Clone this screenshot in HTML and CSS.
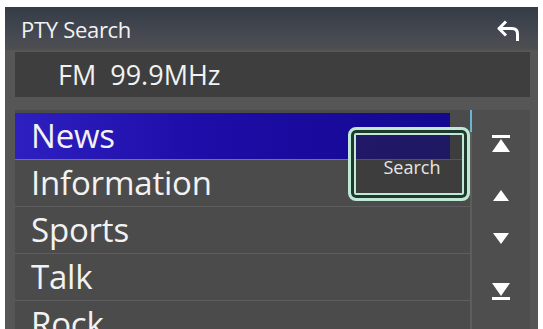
FILE: index.html
```html
<!DOCTYPE html>
<html lang="en">
<head>
    <meta charset="UTF-8">
    <meta name="viewport" content="width=device-width, initial-scale=1.0">
    <title>PTY Search</title>
    <link rel="stylesheet" href="styles.css">
</head>
<body>
    <div class="screen">
        <div class="header">
            <span class="title">PTY Search</span>
            <svg class="back" width="25" height="24" viewBox="0 0 25 24">
                <path d="M9 2.5 L2 9.5 L9 16.5 M2 9.5 H15 Q20.5 9.5 20.5 15 V22" fill="none" stroke="#fff" stroke-width="3" stroke-linejoin="round"/>
            </svg>
        </div>
        <div class="freq">FM&nbsp; 99.9MHz</div>
        <div class="content">
            <div class="list">
                <div class="row active">News</div>
                <div class="row">Information</div>
                <div class="row">Sports</div>
                <div class="row">Talk</div>
                <div class="row">Rock</div>
                <div class="thumb"></div>
                <button class="search-btn">Search</button>
            </div>
            <div class="scroller">
                <svg class="jump" width="20" height="18" viewBox="0 0 20 18">
                    <rect x="1" y="0" width="18" height="3" fill="#fff"/>
                    <polygon points="10,4 1,17 19,17" fill="#fff"/>
                </svg>
                <svg class="step" width="16" height="11" viewBox="0 0 16 11">
                    <polygon points="8,0 0,11 16,11" fill="#fff"/>
                </svg>
                <svg class="step" width="16" height="11" viewBox="0 0 16 11">
                    <polygon points="0,0 16,0 8,11" fill="#fff"/>
                </svg>
                <svg class="jump" width="20" height="18" viewBox="0 0 20 18">
                    <polygon points="1,1 19,1 10,14" fill="#fff"/>
                    <rect x="1" y="15" width="18" height="3" fill="#fff"/>
                </svg>
            </div>
        </div>
    </div>
</body>
</html>
```

FILE: styles.css
```css
body {
    margin: 0;
    background: #fff;
    font-family: "Open Sans", "Noto Sans", sans-serif;
    color: #f2f2f2;
}
.screen {
    margin: 7px 5px 0 5px;
    height: 322px;
    background: #565656;
    overflow: hidden;
}
.header {
    height: 43px;
    display: flex;
    justify-content: space-between;
    align-items: center;
    padding: 0 16px 0 16px;
    background: linear-gradient(180deg, #353c46 0%, #444850 60%, #4e4f52 100%);
}
.title {
    font-size: 22px;
    letter-spacing: -0.3px;
}
.back {
    margin-top: 4px;
}
.freq {
    margin: 2px 8px 0 10px;
    height: 45px;
    line-height: 45px;
    padding-left: 43px;
    background: #3e3e3e;
    font-size: 27px;
    font-weight: 500;
}
.content {
    display: flex;
    margin: 13px 8px 0 10px;
}
.list {
    position: relative;
    flex: 1;
    background: #4b4b4b;
    border-right: 2px solid #5d5d5d;
    padding-top: 3px;
}
.row {
    height: 46px;
    line-height: 46px;
    padding-left: 16px;
    font-size: 33px;
    font-weight: 500;
    letter-spacing: -0.2px;
    border-bottom: 1px solid #5e5e5e;
}
.row.active {
    background: linear-gradient(90deg, #2e1fc0 0%, #1e0da8 40%, #140890 95.5%, #4b4b4b 95.5%);
    border-bottom-color: #6f6fb0;
}
.thumb {
    position: absolute;
    right: -2px;
    top: 0;
    width: 2px;
    height: 22px;
    background: #6ab4d8;
}
.search-btn {
    position: absolute;
    left: 333px;
    top: 17px;
    width: 122px;
    height: 74px;
    border: 3px solid #bfe9d6;
    border-radius: 8px;
    box-shadow: inset 0 0 0 3px #1f3a2c, inset 0 0 0 5px #bfe9d6;
    background: rgba(45, 45, 45, 0.45);
    color: #e6e6e6;
    font-family: "Open Sans", sans-serif;
    font-size: 18px;
    font-weight: 500;
    padding: 6px 0 0 6px;
}
.scroller {
    width: 58px;
    display: flex;
    flex-direction: column;
    align-items: center;
    padding-top: 25px;
    background: #4e4e4e;
}
.step {
    margin-top: 36px;
}
.step + .step {
    margin-top: 32px;
}
.jump + .step {
    margin-top: 37px;
}
.step + .jump {
    margin-top: 38px;
}
```
